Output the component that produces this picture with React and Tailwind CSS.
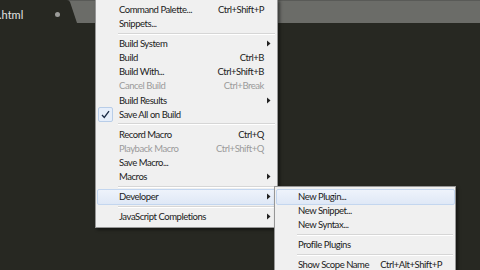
import React from "react";

const mainItems = [
  { label: "Command Palette...", key: "Ctrl+Shift+P" },
  { label: "Snippets..." },
  { sep: true },
  { label: "Build System", arrow: true },
  { label: "Build", key: "Ctrl+B" },
  { label: "Build With...", key: "Ctrl+Shift+B" },
  { label: "Cancel Build", key: "Ctrl+Break", disabled: true },
  { label: "Build Results", arrow: true },
  { label: "Save All on Build", checked: true },
  { sep: true },
  { label: "Record Macro", key: "Ctrl+Q" },
  { label: "Playback Macro", key: "Ctrl+Shift+Q", disabled: true },
  { label: "Save Macro..." },
  { label: "Macros", arrow: true },
  { sep: true },
  { label: "Developer", arrow: true, active: true },
  { sep: true },
  { label: "JavaScript Completions", arrow: true },
];

const subItems = [
  { label: "New Plugin...", active: true },
  { label: "New Snippet..." },
  { label: "New Syntax..." },
  { sep: true },
  { label: "Profile Plugins" },
  { sep: true },
  { label: "Show Scope Name", key: "Ctrl+Alt+Shift+P" },
];

const Arrow = () => (
  <svg width="4" height="7" viewBox="0 0 4 7">
    <path d="M0 0.5 L3.5 3.5 L0 6.5 Z" fill="#222" />
  </svg>
);

const MenuRow = ({ item }) => {
  if (item.sep) {
    return (
      <div className="h-[5.6px] flex items-center pl-[20px]">
        <div className="w-full border-t border-[#d6d6d6] border-b border-b-white" />
      </div>
    );
  }
  return (
    <div
      className={
        "relative h-[14.2px] flex items-center pl-[21px] pr-[11px] " +
        (item.disabled ? "text-[#9b9b9b]" : "text-[#1b1b1b]")
      }
    >
      {item.active && (
        <div className="absolute -left-[1px] -right-[2px] -top-[1px] -bottom-[1px] rounded-[2px] border border-[#c3d6ef] bg-gradient-to-b from-[#eef3fb] to-[#dfe8f6]" />
      )}
      {item.checked && (
        <div className="absolute left-[0px] top-[-0.5px] w-[15px] h-[15px] rounded-[2px] border border-[#b8cde8] bg-[#e6eefa] flex items-center justify-center">
          <svg width="9" height="9" viewBox="0 0 9 9">
            <path d="M1 5 L3.3 7.5 L8 1.2" stroke="#1a2a44" strokeWidth="1.3" fill="none" />
          </svg>
        </div>
      )}
      <span className="relative flex-1 whitespace-nowrap">{item.label}</span>
      {item.key && <span className="relative whitespace-nowrap">{item.key}</span>}
      {item.arrow && (
        <span className="absolute right-[4px] top-0 bottom-0 flex items-center">
          <Arrow />
        </span>
      )}
    </div>
  );
};

export default function App() {
  return (
    <div
      className="relative w-[480px] h-[270px] overflow-hidden bg-[#272822] text-[9.5px] tracking-[-0.45px] leading-none"
      style={{ fontFamily: 'Lato, "Noto Sans", sans-serif' }}
    >
      {/* tab bar */}
      <div className="relative h-[23px] bg-[#6b6c68] border-t border-[#595a57]">
        <svg width="80" height="23" viewBox="0 0 80 23" className="absolute left-0 -top-[1px]">
          <path d="M0 0 L67 0 Q69 0 70 2 L77 23 L0 23 Z" fill="#272822" />
        </svg>
        <div className="relative flex items-center h-full pt-[4px]">
          <span className="text-[#e4e4e4] text-[11px] tracking-normal -ml-[1px]">.html</span>
          <span className="ml-[32px] w-[5px] h-[5px] rounded-full bg-[#9c9c9a]" />
        </div>
      </div>

      {/* main menu */}
      <div className="absolute left-[95px] top-[-1px] w-[183px] bg-[#f0f0f0] border border-[#979797] pt-[2.5px] pb-[3px] px-[2px] shadow-[2px_2px_3px_rgba(0,0,0,0.45)]">
        {mainItems.map((it, i) => (
          <MenuRow key={i} item={it} />
        ))}
      </div>

      {/* submenu */}
      <div className="absolute left-[274px] top-[186px] w-[182px] bg-[#f0f0f0] border border-[#979797] pt-[2.5px] pb-[3px] px-[2px] shadow-[2px_2px_3px_rgba(0,0,0,0.45)]">
        {subItems.map((it, i) => (
          <MenuRow key={i} item={it} />
        ))}
      </div>
    </div>
  );
}
